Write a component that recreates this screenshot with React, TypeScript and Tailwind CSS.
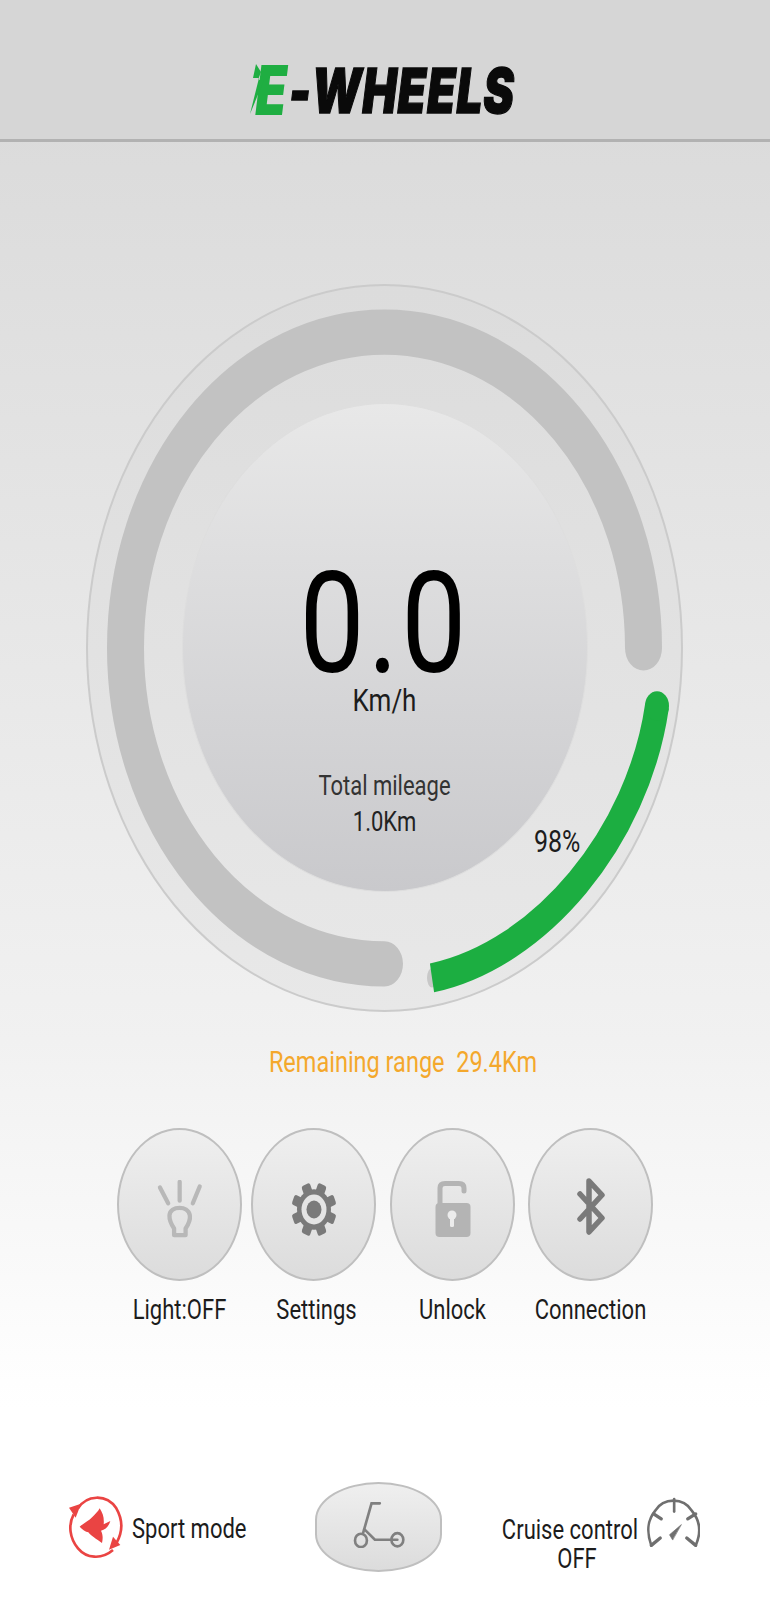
import React from "react";

const W = 597;
const cx = 298.5;
const cy = 298.5;
function pt(r: number, deg: number) {
  const a = (deg * Math.PI) / 180;
  return `${(cx + r * Math.cos(a)).toFixed(2)} ${(cy + r * Math.sin(a)).toFixed(2)}`;
}

function GaugeArcs() {
  return (
    <svg className="absolute inset-0 w-full h-full" viewBox={`0 0 ${W} ${W}`} preserveAspectRatio="none">
      <path d={`M ${pt(259, 0)} A 259 259 0 1 0 ${pt(259, 90)}`} fill="none" stroke="#c2c2c2" strokeWidth="37" strokeLinecap="round" />
      <ellipse cx="346" cy="569" rx="5" ry="8" fill="#c8c8c8" />
      <path d="M571 346 C552 454 454 550 346 569" fill="none" stroke="#1cae41" strokeWidth="24" />
      <circle cx="571" cy="346" r="12" fill="#1cae41" />
    </svg>
  );
}

function LightIcon() {
  return (
    <svg width="46" height="59" viewBox="38 28 140 178" fill="none" stroke="#b8b8b8" strokeLinecap="round">
      <path d="M47 50 L72 98" strokeWidth="13" />
      <path d="M107 33 V90" strokeWidth="13" />
      <path d="M168 47 L147 98" strokeWidth="13" />
      <path d="M90 195 H125 V175 C135 160 140 150 138 135 C135 118 120 112 107 112 C90 112 77 120 76 135 C75 150 80 160 90 175 Z" strokeWidth="13" strokeLinejoin="round" />
    </svg>
  );
}

function GearIcon() {
  const teeth = [0, 45, 90, 135, 180, 225, 270, 315];
  return (
    <svg width="46" height="55" viewBox="0 0 46 46" preserveAspectRatio="none">
      {teeth.map((t) => (
        <rect key={t} x="18.5" y="0.5" width="9" height="10" rx="2" fill="#7a7a7a" transform={`rotate(${t + 22.5} 23 23)`} />
      ))}
      <circle cx="23" cy="23" r="17" fill="#7a7a7a" />
      <circle cx="23" cy="23" r="12.5" fill="#e4e4e4" />
      <circle cx="23" cy="23" r="7.5" fill="#7a7a7a" />
    </svg>
  );
}

function LockIcon() {
  return (
    <svg width="36" height="56" viewBox="0 0 36 56">
      <path d="M5 24 V7 C5 3.5 7 2.5 10 2.5 H24 C27 2.5 29 3.5 29 7 V10" fill="none" stroke="#b4b4b4" strokeWidth="5" strokeLinecap="round" />
      <rect x="0.5" y="22" width="35" height="34" rx="4" fill="#b4b4b4" />
      <ellipse cx="17" cy="34" rx="4.5" ry="4.5" fill="#ececec" />
      <rect x="15" y="35" width="4" height="11" rx="1.5" fill="#ececec" />
    </svg>
  );
}

function BluetoothIcon() {
  return (
    <svg className="-mt-[6px]" width="28" height="57" viewBox="0 0 28 57" fill="none" stroke="#7a7a7a" strokeWidth="5.5" strokeLinejoin="round" strokeLinecap="round">
      <path d="M3 16 L25 40 L12 54 V3 L25 17 L3 41" />
    </svg>
  );
}

function ScooterIcon() {
  return (
    <svg width="52" height="48" viewBox="35 30 155 145" fill="none" stroke="#808080" strokeWidth="8">
      <path d="M115 40 H90 L65 128" strokeLinecap="round" />
      <path d="M68 118 L100 150 H168" strokeLinecap="round" />
      <ellipse cx="58" cy="152" rx="18" ry="20" />
      <ellipse cx="168" cy="150" rx="18" ry="20" />
    </svg>
  );
}

function SportIcon() {
  return (
    <svg width="54" height="64" viewBox="28 30 162 192" fill="none">
      <path d="M55 70 C80 30 140 25 170 70 C190 105 190 140 170 175" stroke="#ea4443" strokeWidth="8" />
      <path d="M160 195 C125 225 80 220 55 190 C30 160 25 120 42 88" stroke="#ea4443" strokeWidth="8" />
      <path d="M28 68 L64 56 L48 98 Z" fill="#ea4443" />
      <path d="M148 194 L182 180 L160 155 Z" fill="#ea4443" />
      <path d="M120 70 C130 85 134 100 132 118 L152 108 C147 125 137 134 124 137 C130 150 130 160 127 174 C110 162 93 152 86 142 C78 140 68 134 60 125 C73 113 88 108 98 96 C106 88 115 80 120 70 Z" fill="#ea4443" />
    </svg>
  );
}

function CruiseIcon() {
  return (
    <svg width="53" height="52" viewBox="35 35 160 155" fill="none" stroke="#6f6f6f" strokeWidth="8" strokeLinecap="round">
      <path d="M48 180 C30 130 40 100 60 75 C85 35 145 35 170 75 C195 105 200 140 182 180" />
      <path d="M117 40 V78" />
      <path d="M55 85 L78 100" strokeWidth="10" />
      <path d="M182 85 L158 100" strokeWidth="10" />
      <path d="M48 180 L75 158" strokeWidth="10" />
      <path d="M182 180 L155 158" strokeWidth="10" />
      <path d="M138 118 L103 148 L112 163 Z" fill="#6f6f6f" stroke="#6f6f6f" strokeWidth="2" strokeLinejoin="round" />
    </svg>
  );
}

function Txt({ children, className = "" }: { children: React.ReactNode; className?: string }) {
  return <span className={`inline-block scale-y-[1.22] font-['Roboto',sans-serif] whitespace-nowrap ${className}`}>{children}</span>;
}

function RoundButton({ icon, label, className = "", labelClass = "" }: { icon: React.ReactNode; label: string; className?: string; labelClass?: string }) {
  return (
    <div className={`flex flex-col items-center w-[125px] ${className}`}>
      <div className="w-[125px] h-[153px] rounded-[50%] border-2 border-[#bfbfbf] bg-gradient-to-b from-[#efefef] to-[#dcdcdc] flex items-center justify-center pt-[9px]">
        {icon}
      </div>
      <Txt className={`mt-[15px] text-[22px] leading-[28px] text-[#1c1c1c] ${labelClass}`}>{label}</Txt>
    </div>
  );
}

export default function App() {
  return (
    <div className="w-[770px] h-[1600px] overflow-hidden flex flex-col bg-gradient-to-b from-[#d8d8d8] via-[#f1f1f1] via-[65%] to-[#ffffff] to-[88%]">
      <header className="h-[142px] shrink-0 bg-[#d6d6d6] border-b-[3px] border-[#b2b2b2] flex items-center justify-center pt-[41px]">
        <div className="relative flex items-center font-['Inter',sans-serif] font-black italic leading-none">
          <span className="inline-block scale-y-[1.34] text-[#1fae42] text-[51px] mr-[2px]">E</span>
          <svg className="absolute left-[-5px] top-[-3px]" width="20" height="52" viewBox="0 0 20 52">
            <path d="M3 16 L9 16 L0 52 L14 18 L8 18 L11 10 L6 2 Z" fill="#1fae42" />
          </svg>
          <span className="inline-block scale-y-[1.34] text-[#0a0a0a] text-[46px] [-webkit-text-stroke:1px_#0a0a0a] tracking-[0.8px]">-WHEELS</span>
        </div>
      </header>

      <section className="relative mt-[142px] ml-[86px] w-[597px] h-[728px] shrink-0">
        <div className="w-full h-full rounded-[50%] border-2 border-[#cbcbcb] bg-gradient-to-b from-[#dcdcdc] to-[#e8e8e8] flex items-center justify-center pb-[1px]">
          <div className="w-[406px] h-[489px] rounded-[50%] border border-[#dedede] bg-gradient-to-b from-[#e8e8e8] to-[#c9c9cc] flex flex-col items-center pt-[160px]">
            <Txt className="text-[116px] leading-[118px] tracking-[3px] text-black">0.0</Txt>
            <Txt className="mt-[3px] text-[26px] leading-[30px] text-[#1c1c1c]">Km/h</Txt>
            <Txt className="mt-[57px] text-[22px] leading-[28px] text-[#333333]">Total mileage</Txt>
            <Txt className="mt-[8px] text-[22px] leading-[28px] text-[#222222]">1.0Km</Txt>
          </div>
        </div>
        <GaugeArcs />
        <Txt className="absolute left-[448px] top-[544px] text-[25px] leading-[28px] text-[#1c1c1c]">98%</Txt>
      </section>

      <div className="mt-[35px] text-center pl-[36px]">
        <Txt className="text-[23.5px] leading-[30px] text-[#f4a82c]">Remaining range&nbsp; 29.4Km</Txt>
      </div>

      <div className="mt-[51px] flex items-start pl-[117px]">
        <RoundButton icon={<LightIcon />} label="Light:OFF" />
        <RoundButton icon={<GearIcon />} label="Settings" className="ml-[9px]" labelClass="ml-[6px]" />
        <RoundButton icon={<LockIcon />} label="Unlock" className="ml-[14px]" />
        <RoundButton icon={<BluetoothIcon />} label="Connection" className="ml-[13px]" />
      </div>

      <div className="mt-[158px] flex items-center relative h-[90px]">
        <div className="flex items-center absolute left-[69px]">
          <SportIcon />
          <Txt className="ml-[9px] mt-[4px] text-[22px] leading-[28px] text-[#1c1c1c]">Sport mode</Txt>
        </div>
        <div className="ml-[315px] w-[127px] h-[90px] rounded-[50%/42%] border-2 border-[#bfbfbf] bg-gradient-to-b from-[#efefef] to-[#dcdcdc] flex items-center justify-center pb-[6px]">
          <ScooterIcon />
        </div>
        <div className="flex items-start absolute left-[502px] top-[34px]">
          <div className="flex flex-col items-center w-[136px] pl-[14px]">
            <Txt className="-ml-[14px] text-[22px] leading-[28px] text-[#1c1c1c]">Cruise control</Txt>
            <Txt className="mt-[1px] text-[22px] leading-[28px] text-[#1c1c1c]">OFF</Txt>
          </div>
          <div className="ml-[9px] -mt-[19px]">
            <CruiseIcon />
          </div>
        </div>
      </div>
    </div>
  );
}
